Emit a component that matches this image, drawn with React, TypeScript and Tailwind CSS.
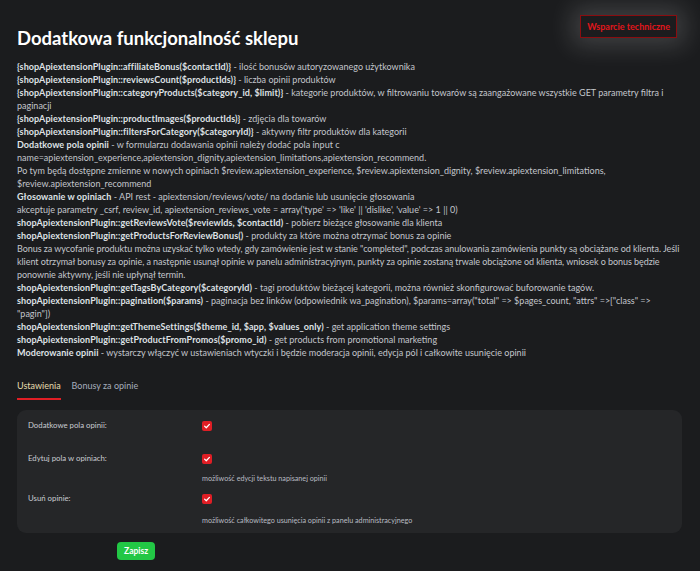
import { useState } from "react";

// Strona ustawień wtyczki apiextension (ciemny motyw)

type Line = { b?: string; t: string; tight?: boolean };

const docs: Line[] = [
  { b: "{shopApiextensionPlugin::affiliateBonus($contactId)}", t: " - ilość bonusów autoryzowanego użytkownika" },
  { b: "{shopApiextensionPlugin::reviewsCount($productIds)}", t: " - liczba opinii produktów" },
  {
    b: "{shopApiextensionPlugin::categoryProducts($category_id, $limit)}",
    t: " - kategorie produktów, w filtrowaniu towarów są zaangażowane wszystkie GET parametry filtra i paginacji",
  },
  { b: "{shopApiextensionPlugin::productImages($productIds)}", t: " - zdjęcia dla towarów" },
  { b: "{shopApiextensionPlugin::filtersForCategory($categoryId)}", t: " - aktywny filtr produktów dla kategorii" },
  {
    b: "Dodatkowe pola opinii",
    t: " - w formularzu dodawania opinii należy dodać pola input c name=apiextension_experience,apiextension_dignity,apiextension_limitations,apiextension_recommend.",
  },
  {
    t: "Po tym będą dostępne zmienne w nowych opiniach $review.apiextension_experience, $review.apiextension_dignity, $review.apiextension_limitations, $review.apiextension_recommend",
  },
  { b: "Głosowanie w opiniach", t: " - API rest - apiextension/reviews/vote/ na dodanie lub usunięcie głosowania" },
  { t: "akceptuje parametry _csrf, review_id, apiextension_reviews_vote = array('type' => 'like' || 'dislike', 'value' => 1 || 0)" },
  { b: "shopApiextensionPlugin::getReviewsVote($reviewIds, $contactId)", t: " - pobierz bieżące głosowanie dla klienta" },
  { b: "shopApiextensionPlugin::getProductsForReviewBonus()", t: " - produkty za które można otrzymać bonus za opinie" },
  {
    t: 'Bonus za wycofanie produktu można uzyskać tylko wtedy, gdy zamówienie jest w stanie "completed", podczas anulowania zamówienia punkty są obciążane od klienta. Jeśli klient otrzymał bonusy za opinie, a następnie usunął opinie w panelu administracyjnym, punkty za opinie zostaną trwale obciążone od klienta, wniosek o bonus będzie ponownie aktywny, jeśli nie upłynął termin.',
    tight: true,
  },
  {
    b: "shopApiextensionPlugin::getTagsByCategory($categoryId)",
    t: " - tagi produktów bieżącej kategorii, można również skonfigurować buforowanie tagów.",
  },
  {
    b: "shopApiextensionPlugin::pagination($params)",
    t: ' - paginacja bez linków (odpowiednik wa_pagination), $params=array("total" => $pages_count, "attrs" =>["class" => "pagin"])',
  },
  { b: "shopApiextensionPlugin::getThemeSettings($theme_id, $app, $values_only)", t: " - get application theme settings" },
  { b: "shopApiextensionPlugin::getProductFromPromos($promo_id)", t: " - get products from promotional marketing" },
  {
    b: "Moderowanie opinii",
    t: " - wystarczy włączyć w ustawieniach wtyczki i będzie moderacja opinii, edycja pól i całkowite usunięcie opinii",
  },
];

const settings = [
  { label: "Dodatkowe pola opinii:", hint: "" },
  { label: "Edytuj pola w opiniach:", hint: "możliwość edycji tekstu napisanej opinii" },
  { label: "Usuń opinie:", hint: "możliwość całkowitego usunięcia opinii z panelu administracyjnego" },
];

function RedCheck() {
  return (
    <span className="inline-flex items-center justify-center w-[10px] h-[10px] rounded-[2px] bg-[#e01e25]">
      <svg viewBox="0 0 10 10" className="w-[8px] h-[8px]">
        <path d="M2 5.2 L4.1 7.2 L8 3" fill="none" stroke="white" strokeWidth="1.6" strokeLinecap="round" strokeLinejoin="round" />
      </svg>
    </span>
  );
}

export default function App() {
  const [tab, setTab] = useState("settings");

  return (
    <div className="min-h-[571px] bg-[#1b1c1e] text-[#c3c6cc] font-['Lato',sans-serif] pl-[17px] pr-[18px]">
      <div className="flex justify-between items-start">
        <h1 className="mt-[26px] text-[18.5px] leading-[24px] font-bold text-white">
          Dodatkowa funkcjonalność sklepu
        </h1>
        <button className="mt-[15px] mr-[5px] h-[23px] px-[6px] border border-[#8a0d10] bg-[#1c1c1e] text-[#e0161b] text-[9px] font-bold shadow-[0_0_24px_8px_rgba(255,255,255,0.16)]">
          Wsparcie techniczne
        </button>
      </div>

      <div className="mt-[10px] mr-[-2px] text-[9px] leading-[13px]">
        {docs.map((l, i) => (
          <div key={i} className={l.tight ? "tracking-[-0.05px]" : ""}>
            {l.b && <b className="text-[#dfe1e5] font-bold tracking-[0.08px]">{l.b}</b>}
            {l.t}
          </div>
        ))}
      </div>

      <div className="mt-[21px] flex gap-[11px] text-[9px] leading-[12px]">
        <button
          onClick={() => setTab("settings")}
          className={
            tab === "settings"
              ? "pb-[6px] border-b-2 border-[#e01e25] text-[#e6dcae]"
              : "pb-[6px] border-b-2 border-transparent text-[#a6adbd]"
          }
        >
          Ustawienia
        </button>
        <button
          onClick={() => setTab("bonus")}
          className={
            tab === "bonus"
              ? "pb-[6px] border-b-2 border-[#e01e25] text-[#e6dcae]"
              : "pb-[6px] border-b-2 border-transparent text-[#a6adbd]"
          }
        >
          Bonusy za opinie
        </button>
      </div>

      <div className="mt-[10px] bg-[#252628] rounded-[9px] px-[11px] pt-[10px] pb-[7px] text-[7.8px] leading-[11px]">
        {settings.map((s, i) => (
          <div
            key={i}
            className={i === 0 ? "grid grid-cols-[174px_1fr] h-[33px]" : i === 1 ? "grid grid-cols-[174px_1fr]" : "grid grid-cols-[174px_1fr] mt-[9px]"}
          >
            <div className="text-[#c9ccd2]">{s.label}</div>
            <div>
              <div className="h-[11px] flex items-center">
                <RedCheck />
              </div>
              {s.hint && <div className={i === 1 ? "mt-[9px] text-[7.2px] text-[#b9bcc2]" : "mt-[11px] text-[7.2px] text-[#b9bcc2]"}>{s.hint}</div>}
            </div>
          </div>
        ))}
      </div>

      <div className="flex pl-[100px] mt-[9px]">
        <button className="h-[18px] px-[7px] rounded-[4px] bg-[#22c745] text-white text-[8.5px] font-bold">
          Zapisz
        </button>
      </div>
    </div>
  );
}
